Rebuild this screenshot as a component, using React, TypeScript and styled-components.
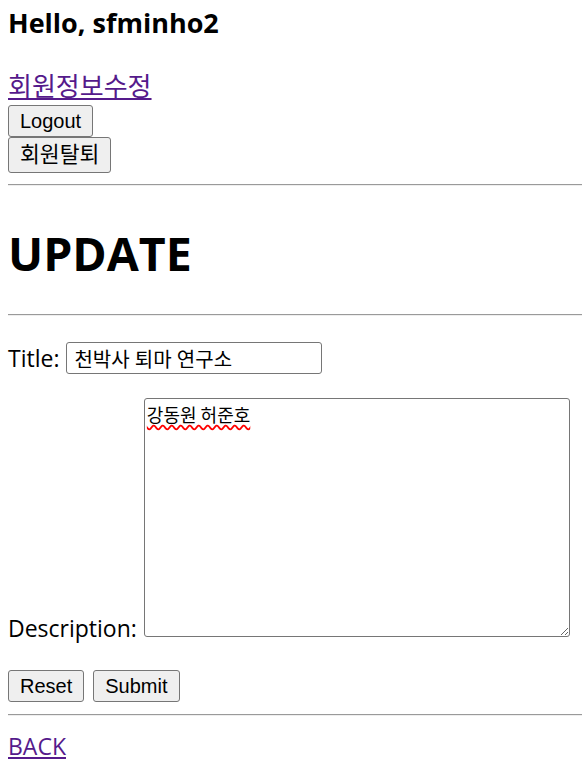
import React from "react";
import styled, { createGlobalStyle } from "styled-components";

const GlobalStyle = createGlobalStyle`
  html, body {
    margin: 0;
    padding: 0;
    background: #ffffff;
  }
  body {
    padding-left: 8px;
    font-family: "Open Sans", "Noto Sans CJK KR", sans-serif;
    font-size: 23px;
    color: #000000;
  }
`;

const Page = styled.div`
  display: flex;
  flex-direction: column;
  align-items: stretch;
`;

const Greeting = styled.h3`
  margin: 3px 0 0;
  font-size: 27px;
  line-height: 40px;
  font-weight: 700;
`;

const LinkLine = styled.div<{ $above: number }>`
  margin-top: ${(p) => p.$above}px;
  line-height: 32px;
`;

const PlainLink = styled.a<{ $size?: number }>`
  font-size: ${(p) => (p.$size ? `${p.$size}px` : "inherit")};
  color: #551a8b;
  text-decoration: underline;
  text-underline-offset: 2px;
`;

const ButtonStack = styled.div`
  display: flex;
  flex-direction: column;
  align-items: flex-start;
  margin-top: 2px;
`;

const Button = styled.button<{ $korean?: boolean }>`
  box-sizing: border-box;
  height: ${(p) => (p.$korean ? 36 : 32)}px;
  margin: 0;
  padding: 0 11px;
  font-family: "Liberation Sans", Arial, "Noto Sans CJK KR", sans-serif;
  font-size: ${(p) => (p.$korean ? 21.6 : 20)}px;
  line-height: 1;
  color: #000000;
  background: #efefef;
  border: 1px solid #767676;
  border-radius: 3px;
`;

const Rule = styled.hr<{ $above: number }>`
  box-sizing: content-box;
  height: 0;
  margin: ${(p) => p.$above}px 0 0;
  border: 0;
  border-top: 1px solid #9a9a9a;
  border-bottom: 1px solid #eeeeee;
`;

const Heading = styled.h1`
  margin: 35px 0 0;
  font-size: 46.5px;
  line-height: 64px;
  font-weight: 700;
`;

const Form = styled.form`
  display: flex;
  flex-direction: column;
  align-items: flex-start;
  margin-top: 26px;
`;

const Field = styled.div<{ $bottom?: boolean; $above?: number }>`
  display: flex;
  align-items: ${(p) => (p.$bottom ? "flex-end" : "center")};
  gap: 7px;
  margin-top: ${(p) => p.$above ?? 0}px;
`;

const Label = styled.label<{ $tight?: boolean }>`
  line-height: ${(p) => (p.$tight ? 18 : 32)}px;
`;

const TextInput = styled.input`
  box-sizing: border-box;
  width: 256px;
  height: 32px;
  margin: 0;
  padding: 0 7px;
  font-family: "Open Sans", "Noto Sans CJK KR", sans-serif;
  font-size: 20px;
  color: #000000;
  background: #ffffff;
  border: 1px solid #767676;
  border-radius: 3px;
`;

const TextArea = styled.textarea`
  box-sizing: border-box;
  width: 426px;
  height: 239px;
  margin: 0;
  padding: 4px 2px;
  font-family: "Noto Sans CJK KR", monospace;
  font-size: 18px;
  line-height: 22px;
  color: #000000;
  background: #ffffff;
  border: 1px solid #767676;
  border-radius: 3px;
  text-decoration: underline wavy #ff0000;
  text-decoration-skip-ink: none;
  text-underline-offset: 2px;
`;

const Actions = styled.div`
  display: flex;
  gap: 9px;
  margin-top: 33px;
`;

export default function App() {
  return (
    <>
      <GlobalStyle />
      <Page>
        <Greeting>Hello, sfminho2</Greeting>
        <LinkLine $above={27}>
          <PlainLink href="#" $size={26}>
            회원정보수정
          </PlainLink>
        </LinkLine>
        <ButtonStack>
          <Button type="button">Logout</Button>
          <Button type="button" $korean>
            회원탈퇴
          </Button>
        </ButtonStack>
        <Rule $above={11} />
        <Heading>UPDATE</Heading>
        <Rule $above={29} />
        <Form onSubmit={(e) => e.preventDefault()}>
          <Field>
            <Label htmlFor="title">Title:</Label>
            <TextInput id="title" type="text" defaultValue="천박사 퇴마 연구소" />
          </Field>
          <Field $bottom $above={24}>
            <Label $tight htmlFor="description">
              Description:
            </Label>
            <TextArea id="description" defaultValue="강동원 허준호" spellCheck={false} />
          </Field>
          <Actions>
            <Button type="reset">Reset</Button>
            <Button type="submit">Submit</Button>
          </Actions>
        </Form>
        <Rule $above={12} />
        <LinkLine $above={14}>
          <PlainLink href="#">BACK</PlainLink>
        </LinkLine>
      </Page>
    </>
  );
}
